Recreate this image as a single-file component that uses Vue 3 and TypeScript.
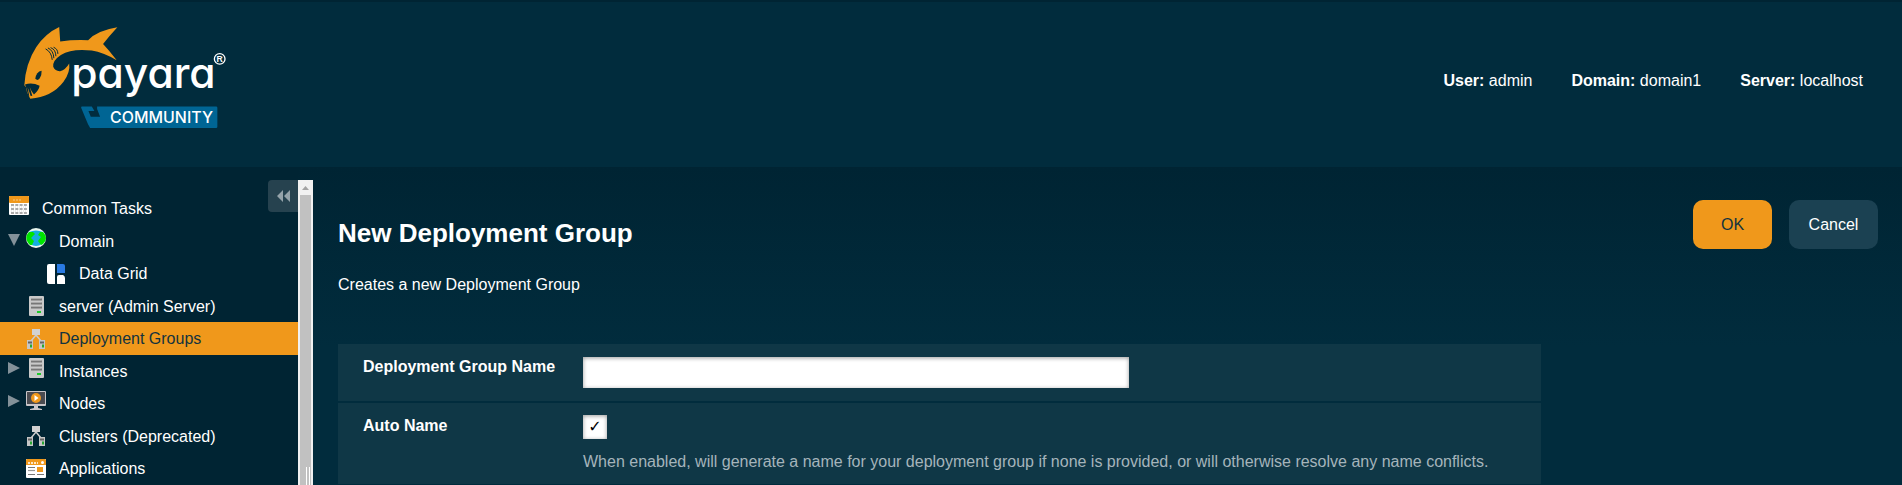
<script setup lang="ts">
import { ref } from 'vue'

type IconName = 'tasks' | 'globe' | 'grid' | 'server' | 'cluster' | 'node' | 'app'

interface TreeItem {
  label: string
  icon: IconName
  level: number
  toggle?: 'open' | 'closed'
  selected?: boolean
}

const items: TreeItem[] = [
  { label: 'Common Tasks', icon: 'tasks', level: 0 },
  { label: 'Domain', icon: 'globe', level: 1, toggle: 'open' },
  { label: 'Data Grid', icon: 'grid', level: 2 },
  { label: 'server (Admin Server)', icon: 'server', level: 1 },
  { label: 'Deployment Groups', icon: 'cluster', level: 1, selected: true },
  { label: 'Instances', icon: 'server', level: 1, toggle: 'closed' },
  { label: 'Nodes', icon: 'node', level: 1, toggle: 'closed' },
  { label: 'Clusters (Deprecated)', icon: 'cluster', level: 1 },
  { label: 'Applications', icon: 'app', level: 1 },
]

const session = [
  { label: 'User:', value: 'admin' },
  { label: 'Domain:', value: 'domain1' },
  { label: 'Server:', value: 'localhost' },
]

const groupName = ref('')
const autoName = ref(true)
</script>

<template>
  <div class="page">
    <header class="masthead">
      <svg class="logo" viewBox="72 78 612 310" role="img" aria-label="Payara Community">
        <path
          fill="#f0981b"
          d="M177 81 L180 125 Q220 119 264 121 Q290 92 352 82 Q328 108 309 132 Q328 152 350 181 Q310 158 275 152 Q215 145 182 165 Q156 182 159 201 Q165 215 180 214 Q196 210 207 191 Q211 217 190 246 Q155 292 90 297 Q84 288 80 277 L77 262 L72 256 Q76 190 108 141 Q136 100 177 81 Z"
        />
        <g fill="#012b3b">
          <path d="M74 254 Q96 247 118 258 Q116 272 101 284 Q93 276 88 261 L96 288 L91 289 L82 262 L87 290 L84 288 L77 262 Z" />
          <path d="M124 213 Q108 216 105 237 Q112 244 118 236 Q125 226 124 213 Z" />
        </g>
        <g fill="none" stroke="#012b3b" stroke-width="3">
          <path d="M136 147 Q154 156 156 180" />
          <path d="M143 144 Q160 152 161 175" />
          <path d="M151 143 Q167 149 167 169" />
          <path d="M160 142 Q173 147 173 162" />
        </g>
        <text class="wordmark" x="213" y="265">payara</text>
        <circle cx="660" cy="177" r="16" fill="none" stroke="#fff" stroke-width="4" />
        <text class="registered" x="660" y="186" text-anchor="middle">R</text>
        <path
          fill="#006594"
          d="M246 320 H275 L283 334 H265 L272 351 H300 L291 328 V320 H649 Q653 320 653 324 V381 Q653 385 649 385 H270 Q264 376 258 360 L243 324 Q242 320 246 320 Z"
        />
        <text class="edition" x="330" y="369">COMMUNITY</text>
      </svg>
      <dl class="session">
        <div v-for="entry in session" :key="entry.label">
          <dt>{{ entry.label }}</dt>
          {{ ' ' }}
          <dd>{{ entry.value }}</dd>
        </div>
      </dl>
    </header>

    <div class="body">
      <aside class="sidebar">
        <nav class="tree" aria-label="Navigation">
          <a
            v-for="item in items"
            :key="item.label"
            href="#"
            class="node"
            :class="['level-' + item.level, { selected: item.selected, leaf: item.level > 0 && !item.toggle }]"
          >
            <span class="toggle" :class="item.toggle">
              <svg v-if="item.toggle === 'open'" width="12" height="12" viewBox="0 0 12 12">
                <path fill="#839199" d="M0 0 H12 L6 12 Z" />
              </svg>
              <svg v-else-if="item.toggle === 'closed'" width="12" height="12" viewBox="0 0 12 12">
                <path fill="#839199" d="M0 0 L12 6 L0 12 Z" />
              </svg>
            </span>
            <svg class="icon" width="20" height="20" viewBox="0 0 20 20" aria-hidden="true">
              <g v-if="item.icon === 'tasks'">
                <rect width="20" height="19" rx="1" fill="#fff" />
                <rect width="20" height="7" rx="1" fill="#f0981b" />
                <path d="M4 4 H12" stroke="#f8c98a" stroke-dasharray="2 1" />
                <path d="M2 9 H18 M2 13 H18 M2 17 H18" stroke="#8e8e8e" stroke-width="1.4" stroke-dasharray="3 1.3" />
                <path d="M2 11 H18 M2 15 H18" stroke="#ddd" stroke-dasharray="1 1" />
              </g>
              <g v-else-if="item.icon === 'globe'">
                <circle cx="10" cy="10" r="10" fill="#e8f6ee" />
                <path fill="#13aee0" d="M3 4 Q10 1 17 4 Q19 10 16 16 Q10 20 4 16 Q1 10 3 4 Z" />
                <path fill="#00e400" d="M3 4 L7 4 L9 6 L5 10 L8 13 L6 17 L4 17 Q-3 10 3 4 Z M14 4 L17 4 Q23 10 17 16 L15 17 L12 13 L15 9 L12 7 Z" />
              </g>
              <g v-else-if="item.icon === 'grid'">
                <path fill="#fff" d="M3 0 H9 V20 H3 Q1 20 1 18 V2 Q1 0 3 0 Z" />
                <path fill="#2a7ae2" d="M11 0 H17 Q19 0 19 2 V9 H11 Z" />
                <path fill="#fff" d="M13 11 H17 Q19 12 19 14 V20 H11 V13 Q11 11 13 11 Z" />
              </g>
              <g v-else-if="item.icon === 'server'">
                <rect x="3" width="15" height="20" rx="1" fill="#c9c9c9" />
                <path d="M5 3.5 H16 M5 7.5 H16 M5 11.5 H16" stroke="#777" stroke-width="2" />
                <path d="M5 2.5 H15 M5 6.5 H15 M5 10.5 H15" stroke="#aaa" />
                <rect x="11" y="15" width="4" height="2" fill="#1fca2c" />
              </g>
              <g v-else-if="item.icon === 'cluster'">
                <path d="M10 6 L5 12 M10 6 L15 12" fill="none" stroke="#ccc" stroke-width="1.5" />
                <rect x="6" width="8" height="6" fill="#d2d2d2" />
                <rect x="1" y="11" width="6" height="9" fill="#c6c6c6" />
                <rect x="13" y="11" width="6" height="9" fill="#c6c6c6" />
                <path d="M2 13.5 H6 M14 13.5 H18" stroke="#666" stroke-width="2" />
                <path d="M4 17 H6 M16 17 H18" stroke="#28a832" stroke-width="3" />
              </g>
              <g v-else-if="item.icon === 'node'">
                <rect y="0" width="20" height="15" rx="1" fill="#c9c5c8" />
                <rect x="1" y="1" width="18" height="12" fill="#4b4b50" />
                <circle cx="10" cy="7" r="5" fill="#f0981b" />
                <path fill="#fff" d="M8.5 4 L12.5 7 L8.5 10 Z" />
                <path fill="#c9c5c8" d="M8 15 H12 V17 L16 18 V19 H4 V18 L8 17 Z" />
              </g>
              <g v-else>
                <rect y="0" width="20" height="19" rx="1" fill="#fff" />
                <path fill="#f0981b" d="M1 0 H19 L20 1 V6 H0 V1 Z" />
                <path d="M2 4 H12" stroke="#fff" stroke-width="1.5" stroke-dasharray="2 1" />
                <circle cx="16.5" cy="3.5" r="1.5" fill="#fff" />
                <path d="M2 8.5 H9 M2 15.5 H9 M11 15.5 H18" stroke="#777" stroke-width="1.2" />
                <path d="M2 11.5 H9" stroke="#999" stroke-width="1.2" />
                <rect x="11" y="8" width="6" height="5" fill="#f0981b" />
              </g>
            </svg>
            <span class="label">{{ item.label }}</span>
          </a>
        </nav>
        <button class="collapse" type="button" aria-label="Collapse navigation">
          <svg width="13" height="12" viewBox="0 0 13 12"><path fill="#95a3aa" d="M6 0 V12 L0 6 Z M13 0 V12 L7 6 Z" /></svg>
        </button>
      </aside>
      <div class="scrollbar" aria-hidden="true">
        <svg width="15" height="15" viewBox="0 0 15 15"><path fill="#a3a3a3" d="M4 10 L7.5 6 L11 10 Z" /></svg>
        <div class="thumb"><span class="grip"></span></div>
      </div>

      <main class="content">
        <div class="heading">
          <h1>New Deployment Group</h1>
          <div class="actions">
            <button class="primary" type="button">OK</button>
            <button class="secondary" type="button">Cancel</button>
          </div>
        </div>
        <p class="intro">Creates a new Deployment Group</p>
        <form class="sheet" @submit.prevent>
          <div class="field">
            <label for="group-name">Deployment Group Name</label>
            <div><input id="group-name" v-model="groupName" class="textbox" type="text" /></div>
          </div>
          <div class="field">
            <label for="auto-name">Auto Name</label>
            <div>
              <input id="auto-name" v-model="autoName" class="checkbox" type="checkbox" aria-describedby="auto-help" />
              <p id="auto-help" class="help">
                When enabled, will generate a name for your deployment group if none is provided, or will otherwise resolve any name conflicts.
              </p>
            </div>
          </div>
        </form>
      </main>
    </div>
  </div>
</template>

<style>
body {
  background: #002433;
}
</style>

<style scoped>
.page {
  display: flex;
  flex-direction: column;
  height: 100vh;
  overflow: hidden;
  box-sizing: border-box;
  border-top: 2px solid #002433;
  background: #002433;
  color: #fff;
  font: 16px/20px "Liberation Sans", Arial, sans-serif;
}

.masthead {
  display: flex;
  flex: none;
  align-items: flex-start;
  justify-content: space-between;
  padding: 24px 39px 38px 24px;
  background: #012c3d;
}

.logo {
  width: 204px;
  height: 103px;
}

.wordmark {
  fill: #fff;
  font: 500 128px Inter, Lato, sans-serif;
  font-feature-settings: "cv11" 1;
}

.registered {
  fill: #fff;
  font: bold 26px "Liberation Sans", sans-serif;
}

.edition {
  fill: #fff;
  font: 500 48px Inter, Lato, sans-serif;
}

.session {
  display: flex;
  gap: 39px;
  margin: 45px 0 0;
}

.session dt,
.session dd {
  display: inline;
  margin: 0;
}

.session dt {
  font-weight: bold;
}

.body {
  display: flex;
  flex: 1;
  min-height: 0;
  background: linear-gradient(#002433, #012c3d 180px);
}

.sidebar {
  position: relative;
  flex: none;
  width: 298px;
  padding-top: 25px;
  box-sizing: border-box;
  background: #002433;
}

.node {
  display: flex;
  align-items: center;
  height: 33px;
  color: #fff;
  text-decoration: none;
}

.node:nth-child(even) {
  height: 32px;
}

.node.selected {
  background: #f0981b;
  color: #12333f;
}

.toggle {
  display: flex;
  width: 18px;
  margin: 0 0 6px 8px;
}

.toggle.open {
  margin-bottom: 2px;
}

.level-0 .toggle {
  width: 1px;
}

.level-2 .toggle {
  width: 38px;
}

.icon {
  flex: none;
  margin-bottom: 6px;
}

.leaf .icon {
  margin-bottom: 0;
}

.label {
  margin: 1px 0 0 13px;
}

.collapse {
  position: absolute;
  top: 13px;
  right: 0;
  display: flex;
  align-items: center;
  justify-content: center;
  width: 30px;
  height: 32px;
  padding: 0;
  border: 0;
  border-radius: 4px 0 0 4px;
  background: #26424f;
}

.scrollbar {
  display: flex;
  flex: none;
  flex-direction: column;
  width: 15px;
  margin-top: 13px;
  background: #f1f1f1;
}

.thumb {
  display: flex;
  flex: 1;
  align-items: flex-end;
  justify-content: flex-end;
  margin: 0 2px;
  background: #c1c1c1;
}

.grip {
  width: 5px;
  height: 18px;
  background: repeating-linear-gradient(90deg, #fff 0 1px, #c1c1c1 1px 3px);
}

.content {
  flex: 1;
  min-width: 0;
  padding: 33px 24px 0 25px;
}

.heading {
  display: flex;
  align-items: flex-start;
  justify-content: space-between;
}

h1 {
  margin: 18px 0 0;
  font-size: 26px;
  line-height: 30px;
}

.actions {
  display: flex;
  gap: 17px;
}

.actions button {
  height: 49px;
  padding: 0 19px;
  border: 0;
  border-radius: 10px;
  font: inherit;
}

.actions .primary {
  min-width: 79px;
  background: #f0981b;
  color: #12333f;
}

.actions .secondary {
  min-width: 89px;
  background: #1b4152;
  color: #fff;
}

.intro {
  margin: 26px 0 49px;
}

.sheet {
  display: flex;
  flex-direction: column;
  gap: 2px;
  width: max-content;
  max-width: 100%;
}

.field {
  display: flex;
  padding: 12px 53px 12px 25px;
  background: #0f3746;
}

.field label {
  flex: none;
  width: 220px;
  padding-top: 1px;
  font-weight: bold;
}

.textbox {
  display: block;
  width: 546px;
  height: 31px;
  margin: 1px 0;
  padding: 0 8px;
  box-sizing: border-box;
  border: 0;
  background: #fff;
  box-shadow: inset 0 1px 4px rgba(0, 0, 0, 0.4);
  font: inherit;
}

.checkbox {
  display: grid;
  width: 24px;
  height: 24px;
  margin: 0;
  appearance: none;
  place-items: center;
  background: #fff;
  box-shadow: inset 0 1px 4px rgba(0, 0, 0, 0.4);
  color: #000;
}

.checkbox:checked::before {
  content: "✓";
  font: 16px/24px "DejaVu Sans", sans-serif;
}

.help {
  margin: 13px 0 0;
  color: #a5b4bb;
}
</style>
